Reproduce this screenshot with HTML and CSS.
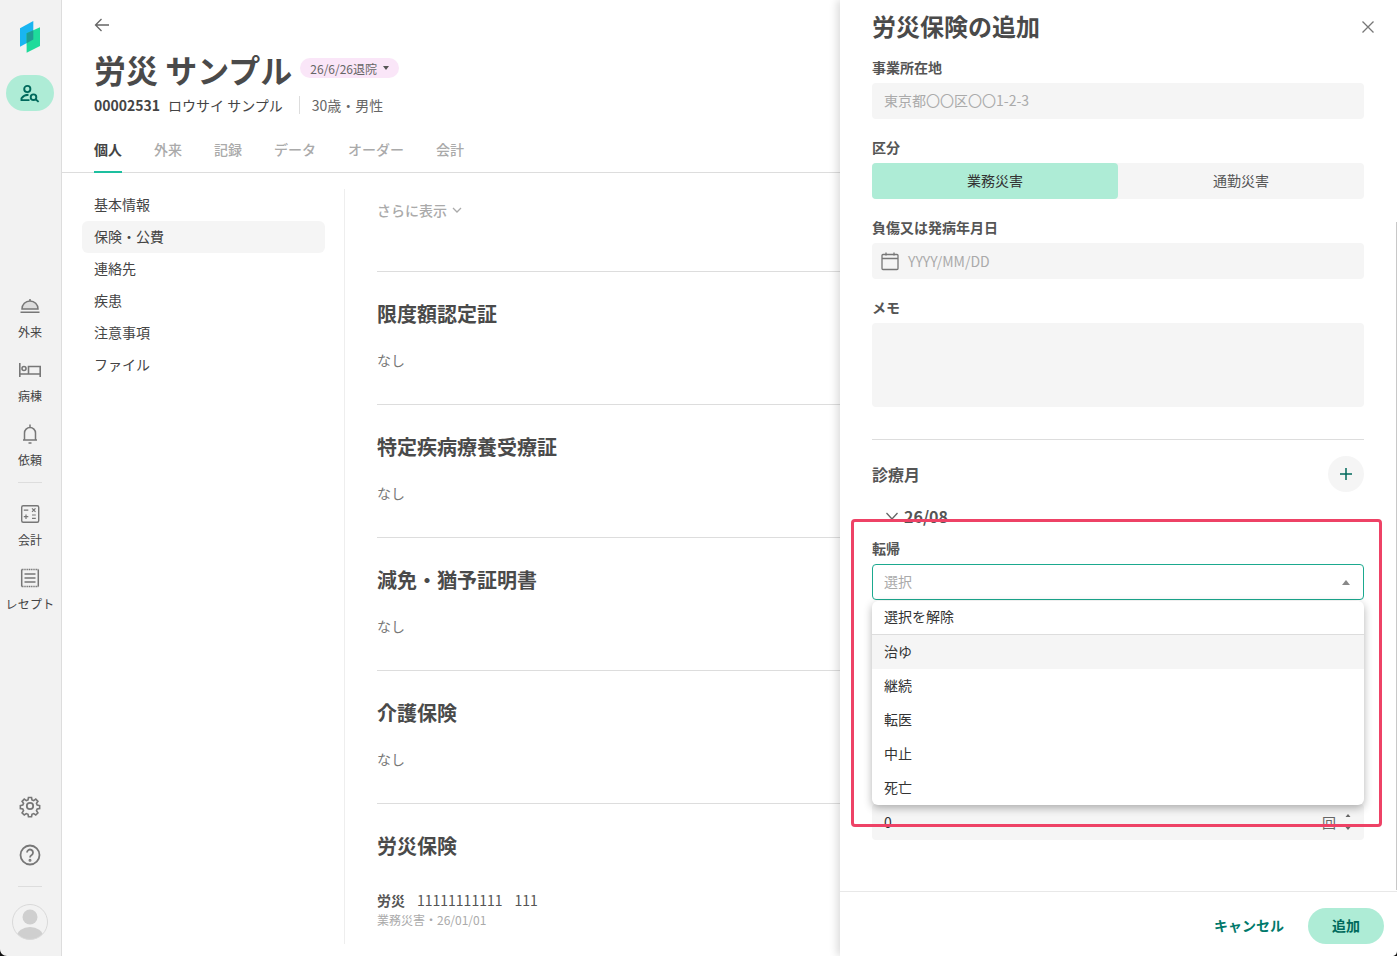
FILE: index.html
```html
<!DOCTYPE html>
<html lang="ja">
<head>
  <meta charset="UTF-8">
  <meta name="viewport" content="width=device-width, initial-scale=1.0">
  <title>労災保険の追加</title>
  <link rel="stylesheet" href="styles.css">
</head>
<body>
  <div class="app">
    <aside class="rail">
      <svg class="logo" width="20" height="32" viewBox="20.700 21 20 32">
        <polygon points="20.7,28.3 34,21 34,39.5 20.7,46.7" fill="#19b5f1"/>
        <polygon points="27.3,33.3 40.7,27.3 40.7,46 27.3,52.7" fill="#1edb9b"/>
        <polygon points="27.3,33.3 34,30.3 34,39.5 27.3,43.2" fill="#1f9c94"/>
      </svg>
      <div class="rail-active">
        <svg width="24" height="24" viewBox="0 0 24 24" fill="none" stroke="#00695c" stroke-width="1.900">
          <circle cx="9.300" cy="8" r="3.100"/>
          <path d="M10.500 13.800c-3 .1-5.500 1.400-7 3.400v1.900h8"/>
          <circle cx="15.500" cy="16.200" r="2.800"/>
          <path d="M17.600 18.300l3 2.600"/>
        </svg>
      </div>
      <div class="rail-nav">
        <div class="rail-item">
          <svg width="24" height="24" viewBox="0 0 24 24" fill="none" stroke="#777" stroke-width="1.500">
            <path d="M4 15c0-4.500 3.500-8 8-8s8 3.500 8 8z" fill="#ddd"/>
            <path d="M12 7V5M2.500 18.200h19"/>
          </svg>
          <span>外来</span>
        </div>
        <div class="rail-item">
          <svg width="24" height="24" viewBox="0 0 24 24" fill="none" stroke="#777" stroke-width="1.600">
            <path d="M1.800 5v14M1.800 16h20.400M22.200 19V8.500H10.500V16"/>
            <circle cx="6" cy="10.500" r="2"/>
          </svg>
          <span>病棟</span>
        </div>
        <div class="rail-item">
          <svg width="24" height="24" viewBox="0 0 24 24" fill="none" stroke="#777" stroke-width="1.500">
            <path d="M5 18h14M6.500 18v-7a5.500 5.500 0 0 1 11 0v7M12 2.500v3M10.500 21h3"/>
          </svg>
          <span>依頼</span>
        </div>
        <div class="rail-line"></div>
        <div class="rail-item">
          <svg width="24" height="24" viewBox="0 0 24 24" fill="none" stroke="#777" stroke-width="1.400">
            <rect x="3.700" y="3.700" width="17" height="16.500" rx="1.500"/>
            <path d="M5.800 8.200h4.500M14 6.300l3.500 3.500M17.500 6.300L14 9.800M5.800 14.700h4.500M8 12.500V17M14 13h3.800M14 16.300h3.800" stroke-width="1.200"/>
          </svg>
          <span>会計</span>
        </div>
        <div class="rail-item">
          <svg width="24" height="24" viewBox="0 0 24 24" fill="none" stroke="#777" stroke-width="1.500">
            <path d="M3.700 3.500h16.600" stroke-dasharray="1.200 .6"/>
            <path d="M3.700 20.500h16.600" stroke-dasharray="1.200 .6"/>
            <path d="M3.700 3.500v17M20.300 3.500v17M6.500 8h11M6.500 12h11M6.500 16h11"/>
          </svg>
          <span class="rail-long">レセプト</span>
        </div>
      </div>
      <div class="rail-bottom">
        <svg width="24" height="24" viewBox="0 0 24 24" fill="none" stroke="#777" stroke-width="1.800">
          <circle cx="12" cy="12" r="3.200"/>
          <path d="M10.300 2.500h3.400l.5 2.700 1.900.8 2.300-1.600 2.400 2.400-1.600 2.300.8 1.900 2.700.5v3.400l-2.700.5-.8 1.900 1.600 2.300-2.400 2.400-2.300-1.600-1.900.8-.5 2.700h-3.400l-.5-2.700-1.900-.8-2.300 1.600-2.400-2.400 1.600-2.300-.8-1.900-2.700-.5v-3.400l2.700-.5.8-1.900-1.600-2.300 2.400-2.400 2.300 1.600 1.900-.8z" transform="translate(1.200 1.200) scale(.9)"/>
        </svg>
        <svg class="rail-help" width="24" height="24" viewBox="0 0 24 24" fill="none" stroke="#777" stroke-width="1.800">
          <circle cx="12" cy="12" r="9.500"/>
          <path d="M9 9.500a3 3 0 1 1 4.700 2.500c-1.100.7-1.700 1.300-1.700 2.500"/>
          <circle cx="12" cy="17.300" r=".6"/>
        </svg>
        <div class="rail-line"></div>
        <svg class="avatar" width="36" height="36" viewBox="0 0 36 36">
          <clipPath id="avatar-clip"><circle cx="18" cy="18" r="17.500"/></clipPath>
          <circle cx="18" cy="18" r="17.500" fill="#f2f2f2"/>
          <g clip-path="url(#avatar-clip)" fill="#cfcfcf">
            <circle cx="18" cy="13" r="7.500"/>
            <ellipse cx="18" cy="32" rx="13" ry="9"/>
          </g>
          <circle cx="18" cy="18" r="17.500" fill="none" stroke="#d9d9d9"/>
        </svg>
      </div>
    </aside>

    <main class="main">
      <header class="head">
        <svg class="back" width="16" height="16" viewBox="0 0 16 16" fill="none" stroke="#666" stroke-width="1.300">
          <path d="M15 8H1.500M7.500 2L1.500 8l6 6"/>
        </svg>
        <div class="title-row">
          <h1>労災 サンプル</h1>
          <span class="status">26/6/26退院<i class="caret"></i></span>
        </div>
        <div class="sub">
          <b>00002531</b><span class="kana">ロウサイ サンプル</span><span class="age">30歳・男性</span>
        </div>
        <nav class="tabs">
          <a class="tab active">個人</a>
          <a class="tab">外来</a>
          <a class="tab">記録</a>
          <a class="tab">データ</a>
          <a class="tab">オーダー</a>
          <a class="tab">会計</a>
        </nav>
      </header>
      <div class="body">
        <ul class="side">
          <li>基本情報</li>
          <li class="current">保険・公費</li>
          <li>連絡先</li>
          <li>疾患</li>
          <li>注意事項</li>
          <li>ファイル</li>
        </ul>
        <div class="content">
          <div class="more">さらに表示
            <svg width="12" height="12" viewBox="0 0 12 12" fill="none" stroke="#aaa" stroke-width="1.300"><path d="M2 4l4 4 4-4"/></svg>
          </div>
          <section class="block">
            <h2>限度額認定証</h2>
            <p>なし</p>
          </section>
          <section class="block">
            <h2>特定疾病療養受療証</h2>
            <p>なし</p>
          </section>
          <section class="block">
            <h2>減免・猶予証明書</h2>
            <p>なし</p>
          </section>
          <section class="block">
            <h2>介護保険</h2>
            <p>なし</p>
          </section>
          <section class="block">
            <h2>労災保険</h2>
            <div class="rosai"><b>労災</b><span>11111111111</span><span>111</span></div>
            <div class="rosai-sub">業務災害・26/01/01</div>
          </section>
        </div>
      </div>
    </main>

    <div class="drawer">
      <div class="drawer-body">
        <div class="drawer-title">
          <h3>労災保険の追加</h3>
          <svg width="16" height="16" viewBox="0 0 16 16" fill="none" stroke="#777" stroke-width="1.300"><path d="M2.500 2.500l11 11M13.500 2.500l-11 11"/></svg>
        </div>
        <label class="lbl">事業所在地</label>
        <div class="field muted">東京都〇〇区〇〇1-2-3</div>
        <label class="lbl">区分</label>
        <div class="segs">
          <div class="seg on">業務災害</div>
          <div class="seg">通勤災害</div>
        </div>
        <label class="lbl">負傷又は発病年月日</label>
        <div class="field muted date">
          <svg width="20" height="20" viewBox="0 0 20 20" fill="none" stroke="#777" stroke-width="1.300">
            <rect x="2" y="3.500" width="16" height="15" rx="1"/>
            <path d="M2 7.500h16M6 1.500v3M14 1.500v3"/>
          </svg>
          YYYY/MM/DD
        </div>
        <label class="lbl">メモ</label>
        <div class="memo"></div>
        <div class="sep"></div>
        <div class="month-head">
          <h4>診療月</h4>
          <div class="plus">
            <svg width="14" height="14" viewBox="0 0 14 14" fill="none" stroke="#00695c" stroke-width="1.500"><path d="M7 1v12M1 7h12"/></svg>
          </div>
        </div>
        <div class="month">
          <svg width="16" height="16" viewBox="0 0 16 16" fill="none" stroke="#666" stroke-width="1.300"><path d="M2.500 5l5.500 6 5.500-6"/></svg>
          26/08
        </div>
        <label class="lbl outcome">転帰</label>
        <div class="select">選択<i class="up"></i></div>
        <div class="field count">0
          <span class="unit">回
            <svg width="10" height="20" viewBox="0 0 10 20" fill="#666"><path d="M5 2l2.500 3h-5zM5 18l-2.500-3h5z"/></svg>
          </span>
        </div>
      </div>
      <div class="drawer-foot">
        <a class="cancel">キャンセル</a>
        <a class="add">追加</a>
      </div>
      <ul class="menu">
        <li class="clear">選択を解除</li>
        <li class="hover">治ゆ</li>
        <li>継続</li>
        <li>転医</li>
        <li>中止</li>
        <li>死亡</li>
      </ul>
      <div class="scroll"></div>
    </div>

    <div class="mark"></div>
    <svg class="corner corner-l" width="7" height="7" viewBox="0 0 7 7"><path d="M0 0c0 4 3 7 7 7H0z"/></svg>
    <svg class="corner corner-r" width="5" height="5" viewBox="0 0 5 5"><path d="M5 0c0 3-2 5-5 5h5z"/></svg>
  </div>
</body>
</html>
```
FILE: styles.css
```css
*{
  margin: 0;
  padding: 0;
  box-sizing: border-box;
}
html,body{
  height: 100%;
  overflow: hidden;
}
body{
  font-family: "Noto Sans CJK JP", "Noto Sans", sans-serif;
  font-size: 14px;
  color: #444;
  background: #fff;
}
ul{
  list-style: none;
}
.app{
  position: relative;
  display: flex;
  width: 1397px;
  height: 956px;
  overflow: hidden;
}

/* left rail */
.rail{
  width: 62px;
  flex: none;
  padding-right: 1px;
  display: flex;
  flex-direction: column;
  align-items: center;
  background: #f2f2f2;
  border-right: 1px solid #ddd;
}
.logo{
  margin-top: 21px;
  flex: none;
}
.rail-active{
  width: 48px;
  height: 36px;
  margin-top: 22px;
  display: flex;
  align-items: center;
  justify-content: center;
  background: #aeecd6;
  border-radius: 18px;
}
.rail-nav{
  margin-top: 183px;
  display: flex;
  flex-direction: column;
  align-items: center;
}
.rail-item{
  height: 64px;
  display: flex;
  flex-direction: column;
  align-items: center;
  font-size: 12px;
  line-height: 18px;
  color: #444;
}
.rail-item span{
  margin-top: 5px;
  white-space: nowrap;
}
.rail-long{
  letter-spacing: .2px;
}
.rail-line{
  width: 24px;
  height: 1px;
  background: #ddd;
}
.rail-nav .rail-line{
  margin: -4px 0 19px;
}
.rail-bottom{
  margin-top: auto;
  padding-bottom: 16px;
  display: flex;
  flex-direction: column;
  align-items: center;
}
.rail-help{
  margin-top: 25px;
}
.rail-bottom .rail-line{
  margin: 19px 0 17px;
}

/* patient page */
.main{
  flex: 1;
  min-width: 0;
}
.head{
  height: 173px;
  padding: 17px 0 0 32px;
  border-bottom: 1px solid #ddd;
}
.back{
  display: block;
}
.title-row{
  margin-top: 9px;
  display: flex;
  align-items: center;
  gap: 8px;
}
.title-row h1{
  font-size: 32px;
  line-height: 54px;
  font-weight: 700;
  color: #4a4a4a;
  white-space: nowrap;
}
.status{
  height: 20px;
  margin-top: -2px;
  padding: 0 10px;
  display: flex;
  align-items: center;
  gap: 6px;
  font-size: 12px;
  color: #666;
  background: #fae6f8;
  border-radius: 10px;
}
.caret{
  width: 0;
  height: 0;
  border: 3px solid transparent;
  border-top: 4px solid #555;
  border-bottom: 0;
}
.sub{
  display: flex;
  align-items: center;
  height: 18px;
  line-height: 18px;
}
.sub b{
  font-weight: 700;
}
.kana{
  margin-left: 8px;
  padding-right: 16px;
  border-right: 1px solid #ddd;
}
.age{
  margin-left: 12px;
  color: #666;
}
.tabs{
  display: flex;
  gap: 32px;
  margin-top: 19px;
}
.tab{
  height: 40px;
  padding-top: 6px;
  line-height: 20px;
  color: #aaa;
  font-weight: 500;
}
.tab.active{
  color: #444;
  font-weight: 700;
  border-bottom: 2px solid #1dbf9f;
}
.body{
  display: flex;
  padding: 16px 0 0 20px;
  height: 771px;
}
.side{
  width: 243px;
  flex: none;
}
.side li{
  height: 32px;
  line-height: 30px;
  padding-left: 12px;
  border-radius: 6px;
}
.side .current{
  background: #f5f5f5;
}
.content{
  flex: 1;
  margin-left: 19px;
  padding-left: 32px;
  border-left: 1px solid #eee;
}
.more{
  height: 82px;
  padding-top: 11px;
  line-height: 20px;
  color: #aaa;
  font-weight: 500;
  display: flex;
  align-items: flex-start;
  gap: 4px;
}
.more svg{
  margin-top: 4px;
}
.block{
  height: 133px;
  border-top: 1px solid #ddd;
  padding-top: 27px;
}
.block h2{
  font-size: 20px;
  line-height: 30px;
  font-weight: 700;
  color: #4a4a4a;
}
.block p{
  margin-top: 21px;
  line-height: 20px;
  color: #777;
}
.rosai{
  margin-top: 29px;
  display: flex;
  gap: 12px;
  line-height: 20px;
  color: #555;
}
.rosai b{
  font-weight: 700;
}
.rosai-sub{
  margin-top: 1px;
  font-size: 12px;
  line-height: 18px;
  color: #aaa;
}

/* drawer */
.drawer{
  position: absolute;
  top: 0;
  right: 0;
  bottom: 0;
  width: 557px;
  display: flex;
  flex-direction: column;
  background: #fff;
  box-shadow: -3px 0 8px rgba(0,0,0,.14);
}
.drawer-body{
  flex: 1;
  padding: 0 33px 0 32px;
}
.drawer-title{
  height: 58px;
  display: flex;
  justify-content: space-between;
  align-items: flex-start;
  padding-top: 8px;
}
.drawer-title h3{
  font-size: 24px;
  line-height: 36px;
  font-weight: 700;
  color: #4a4a4a;
}
.drawer-title svg{
  margin: 11px -12px 0 0;
}
.lbl{
  display: block;
  height: 25px;
  line-height: 18px;
  font-weight: 700;
  color: #555;
}
.field{
  height: 36px;
  line-height: 36px;
  padding: 0 12px;
  background: #f5f5f5;
  border-radius: 4px;
  margin-bottom: 19px;
}
.muted{
  color: #aaa;
  line-height: 34px;
}
.date{
  display: flex;
  align-items: center;
  gap: 8px;
  padding-left: 8px;
}
.segs{
  display: flex;
  height: 36px;
  margin-bottom: 19px;
  background: #f5f5f5;
  border-radius: 4px;
}
.seg{
  flex: 1;
  line-height: 34px;
  text-align: center;
  color: #555;
  border-radius: 4px;
}
.seg.on{
  background: #aeecd6;
  color: #333;
}
.memo{
  height: 84px;
  background: #f5f5f5;
  border-radius: 4px;
}
.sep{
  height: 1px;
  margin-top: 32px;
  background: #ddd;
}
.month-head{
  margin-top: 16px;
  display: flex;
  justify-content: space-between;
  align-items: center;
}
.month-head h4{
  font-size: 16px;
  font-weight: 700;
  color: #555;
}
.plus{
  width: 36px;
  height: 36px;
  display: flex;
  align-items: center;
  justify-content: center;
  background: #f5f5f5;
  border-radius: 50%;
}
.month{
  margin: 12px 0 0 12px;
  height: 24px;
  display: flex;
  align-items: center;
  gap: 4px;
  font-size: 16px;
  font-weight: 700;
  color: #555;
}
.outcome{
  margin-top: 11px;
  height: 25px;
}
.select{
  position: relative;
  height: 36px;
  line-height: 32px;
  padding: 0 11px;
  color: #aaa;
  border: 1px solid #1ba98f;
  border-radius: 4px;
}
.up{
  position: absolute;
  right: 13px;
  top: 15px;
  width: 0;
  height: 0;
  border: 4px solid transparent;
  border-bottom: 5px solid #888;
  border-top: 0;
}
.count{
  margin-top: 204px;
  color: #333;
  display: flex;
  justify-content: space-between;
}
.unit{
  display: flex;
  align-items: center;
  gap: 7px;
  color: #666;
  margin-right: -1px;
}
.drawer-foot{
  height: 65px;
  flex: none;
  display: flex;
  justify-content: flex-end;
  align-items: flex-start;
  gap: 24px;
  padding: 16px 13px 0 0;
  border-top: 1px solid #e8e8e8;
}
.cancel{
  line-height: 34px;
  font-weight: 700;
  color: #00796b;
}
.add{
  width: 76px;
  height: 36px;
  line-height: 34px;
  text-align: center;
  font-weight: 700;
  color: #00695c;
  background: #aeecd6;
  border-radius: 18px;
}
.menu{
  position: absolute;
  left: 32px;
  top: 601px;
  width: 492px;
  height: 204px;
  background: #fff;
  border-radius: 6px;
  overflow: hidden;
  box-shadow: 0 3px 8px rgba(0,0,0,.3);
  color: #333;
}
.menu li{
  height: 34px;
  line-height: 33px;
  padding-left: 12px;
}
.menu .clear{
  line-height: 31px;
  border-bottom: 1px solid #ddd;
}
.menu .hover{
  background: #f5f5f5;
}
.scroll{
  position: absolute;
  right: 0;
  top: 222px;
  width: 1px;
  height: 668px;
  background: #c8c8c8;
}

/* annotation + window corners */
.mark{
  position: absolute;
  left: 851px;
  top: 519px;
  width: 531px;
  height: 308px;
  border: 3px solid #ee4266;
  border-radius: 4px;
}
.corner{
  position: absolute;
  bottom: 0;
  fill: #111;
}
.corner-l{
  left: 0;
}
.corner-r{
  right: 0;
}
```
